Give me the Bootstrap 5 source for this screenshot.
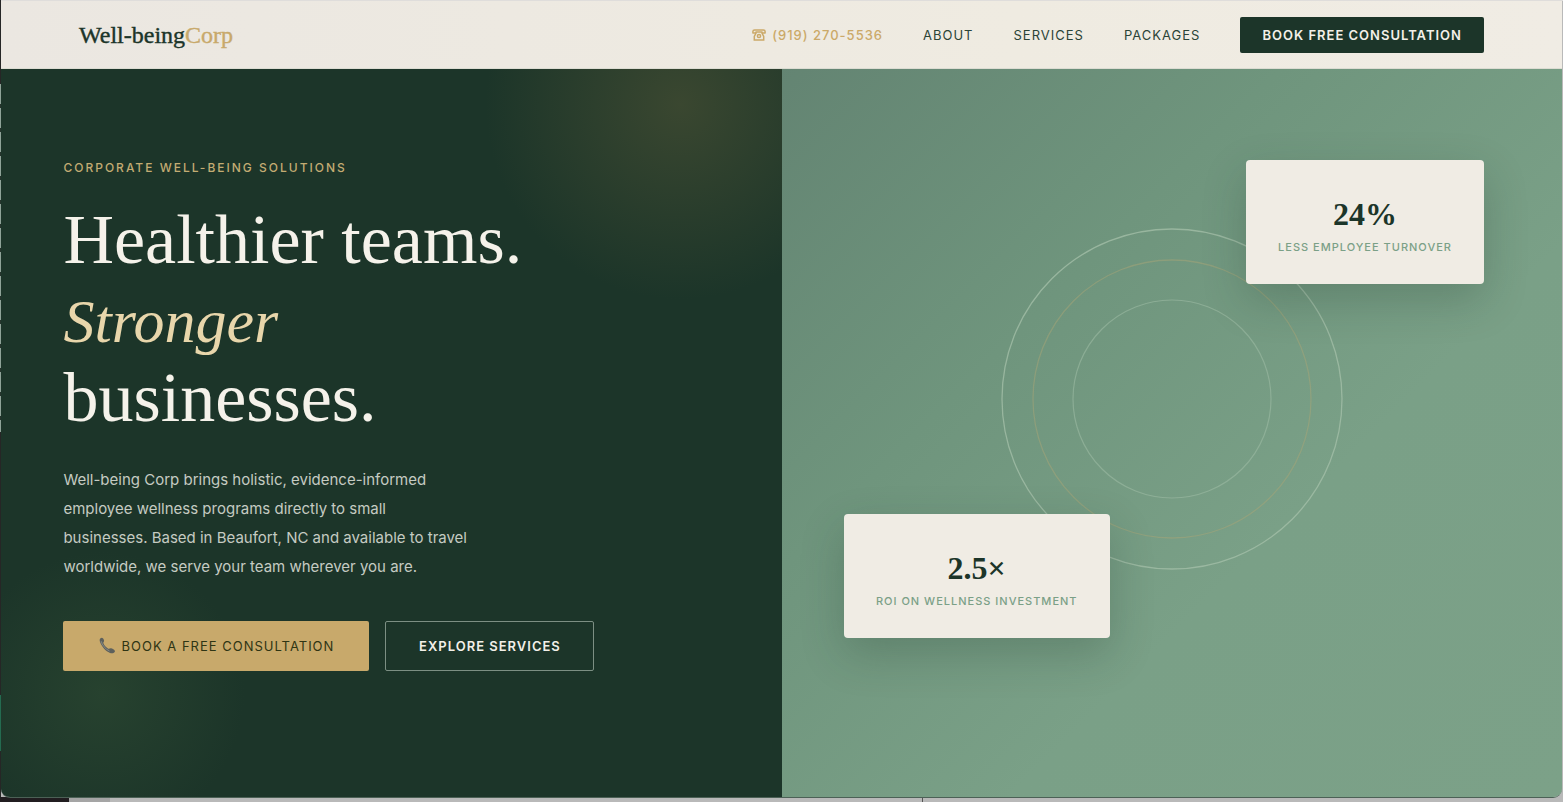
<!DOCTYPE html>
<html lang="en">
<head>
<meta charset="utf-8">
<meta name="viewport" content="width=device-width, initial-scale=1">
<title>Well-being Corp</title>
<link href="https://cdn.jsdelivr.net/npm/bootstrap@5.3.0/dist/css/bootstrap.min.css" rel="stylesheet">
<style>
:root{--forest:#1c3529;--cream:#f0ece4;--gold:#c8a96b;--sage:#7ba087}
body{font-family:Inter,"Liberation Sans",sans-serif;font-size:15px;min-height:100vh;padding:1px 1px 4px;
  background:
    linear-gradient(#555,#555) 922px 100%/1px 4px no-repeat,
    linear-gradient(90deg,#211d20 69px,#a5a5a5 69px 110px,transparent 110px) 0 100%/100% 5px no-repeat,
    linear-gradient(#246b50,#246b50) 0 695px/2px 56px no-repeat,
    repeating-linear-gradient(#8fa398 0 20px,#26352d 20px 24px) 0 84px/1px 348px no-repeat,
    linear-gradient(#262626,#262626) 0 0/1px 100% no-repeat,
    linear-gradient(#dfdddb,#dfdddb) 0 0/100% 1px no-repeat,
    #b9b9b9}
.serif{font-family:"Liberation Serif",serif}
.site{border-radius:0 0 9px 9px;overflow:hidden;position:relative;border-bottom:1px solid #4c6156}
.topbar{background:linear-gradient(90deg,#ebe7e1,#efebe1 65%,#f0ece4);padding:0 5%;height:68px;border-bottom:1px solid #dcdcd2}
.brand{font-size:24px;color:var(--forest);text-decoration:none;line-height:32px;-webkit-text-stroke:.4px currentColor}
.brand span{color:var(--gold)}
.topbar .links{gap:40px}
.links a{font-size:13px;letter-spacing:1px;line-height:20px;color:#2b4437;text-decoration:none}
.links a.tel{color:#cba968;font-weight:500;gap:6px}
.btn-cta{background:var(--forest);color:#f3f0e8;font-size:13px;font-weight:600;letter-spacing:1px;border-radius:2px;padding:8px 22px;line-height:20px;border:0}
.pane-left{padding:98px 4% 68px;
  background:radial-gradient(circle 195px at 87% 13%,#3a4730,rgba(58,71,48,0)),
  radial-gradient(circle 142px at 13% 87%,#27422f,#27422f00),var(--forest)}
.hero-row{min-height:calc(100vh - 6px)}
.eyebrow{font-size:12px;letter-spacing:2px;line-height:20px;font-weight:500;color:#c3ac73;margin-bottom:22px}
h1{font-size:70px;line-height:79px;font-weight:400;color:#f5f2ea;margin-bottom:28px}
h1 em{color:#e8d6ab;font-size:62px;line-height:62px}
.lede{font-size:15px;line-height:29px;color:#c5cbc2;max-width:430px;margin-bottom:40px}
.btn-hero{height:50px;border-radius:2px;font-size:13px;letter-spacing:1px;padding:0 32px;line-height:20px}
.btn-gold{background:var(--gold);color:#2f3514;border:0;gap:6px;min-width:306px}
.btn-line{color:#f3f0e8;border:1px solid #7c8f83;font-weight:600;min-width:209px}
.pane-right{background:linear-gradient(135deg,#628271,#6f957d 36%,#7aa087 65%,#7ca188);position:relative}
.rings{position:absolute;left:50%;top:50%;transform:translate(-50%,-50%);width:342px;height:342px}
.stat{position:absolute;background:var(--cream);border-radius:4px;padding:32px 32px 26px;text-align:center;box-shadow:0 16px 44px rgba(28,53,41,.24)}
.stat-a{top:20%;right:10%}
.stat-b{bottom:20%;left:8%}
.stat-num{font-size:32px;line-height:44px;font-weight:700;color:var(--forest)}
.stat-label{font-size:11px;line-height:22px;letter-spacing:1px;font-weight:500;color:var(--sage);white-space:nowrap}
</style>
</head>
<body>
<div class="site">
  <header class="topbar d-flex align-items-center justify-content-between position-absolute top-0 start-0 w-100 z-3">
    <a href="#" class="brand serif">Well-being<span>Corp</span></a>
    <nav class="links d-flex align-items-center">
      <a href="#" class="tel d-flex align-items-center">
        <svg width="14" height="12" viewBox="0 0 14 12" fill="none" stroke="currentColor" stroke-width="1.5" aria-hidden="true"><path d="M.9 4V2.600Q.9.900 2.600.900h8.800q1.700 0 1.700 1.700V4H10V3H4v1z" stroke-linejoin="round"/><path d="M4 4.200 2.300 7.500v3.500h9.400V7.500L10 4.200"/><circle cx="7" cy="7" r="1.600"/></svg>
        (919) 270-5536</a>
      <a href="#">ABOUT</a>
      <a href="#">SERVICES</a>
      <a href="#">PACKAGES</a>
      <button type="button" class="btn btn-cta">BOOK FREE CONSULTATION</button>
    </nav>
  </header>
  <main class="row g-0 hero-row">
    <section class="col-6 pane-left d-flex flex-column justify-content-center">
      <div class="eyebrow">CORPORATE WELL-BEING SOLUTIONS</div>
      <h1 class="serif">Healthier teams.<br><em>Stronger</em><br>businesses.</h1>
      <p class="lede">Well-being Corp brings holistic, evidence-informed<br>employee wellness programs directly to small<br>businesses. Based in Beaufort, NC and available to travel<br>worldwide, we serve your team wherever you are.</p>
      <div class="d-flex gap-3">
        <button type="button" class="btn btn-hero btn-gold d-flex align-items-center justify-content-center">
          <svg width="17" height="17" viewBox="0 0 17 17" aria-hidden="true"><path d="M1.500 1.200C3 0 4.500 1 5 3.200c.3 1.300-.8 1.800-.7 2.700.7 2.200 2.800 4.400 5 5.800.9.400 1.700-.8 2.900-.4 2.200.6 4.500 2.300 3.500 3.700-1.600 2.200-4.700 1.500-7.800-.7C4.500 11.800.900 6.500.700 3.600.600 2.500.8 1.700 1.500 1.200z" fill="#5d605c"/><path d="M2.200 4.200C3 8 6.200 12 10.500 14" stroke="#858984" stroke-width="1" fill="none"/></svg>
          BOOK A FREE CONSULTATION</button>
        <button type="button" class="btn btn-hero btn-line">EXPLORE SERVICES</button>
      </div>
    </section>
    <section class="col-6 pane-right">
      <svg class="rings" viewBox="0 0 342 342" fill="none" aria-hidden="true">
        <circle cx="171" cy="171" r="170" stroke="#a5c0aa" stroke-opacity=".75" stroke-width="1.300"/>
        <circle cx="171" cy="171" r="139" stroke="#a8a578" stroke-opacity=".5" stroke-width="1.300"/>
        <circle cx="171" cy="171" r="99" stroke="#9dbaa3" stroke-opacity=".6" stroke-width="1.200"/>
      </svg>
      <div class="stat stat-a">
        <div class="stat-num serif">24%</div>
        <div class="stat-label">LESS EMPLOYEE TURNOVER</div>
      </div>
      <div class="stat stat-b">
        <div class="stat-num serif">2.5×</div>
        <div class="stat-label">ROI ON WELLNESS INVESTMENT</div>
      </div>
    </section>
  </main>
</div>
<script src="https://cdn.jsdelivr.net/npm/bootstrap@5.3.0/dist/js/bootstrap.bundle.min.js"></script>
</body>
</html>
